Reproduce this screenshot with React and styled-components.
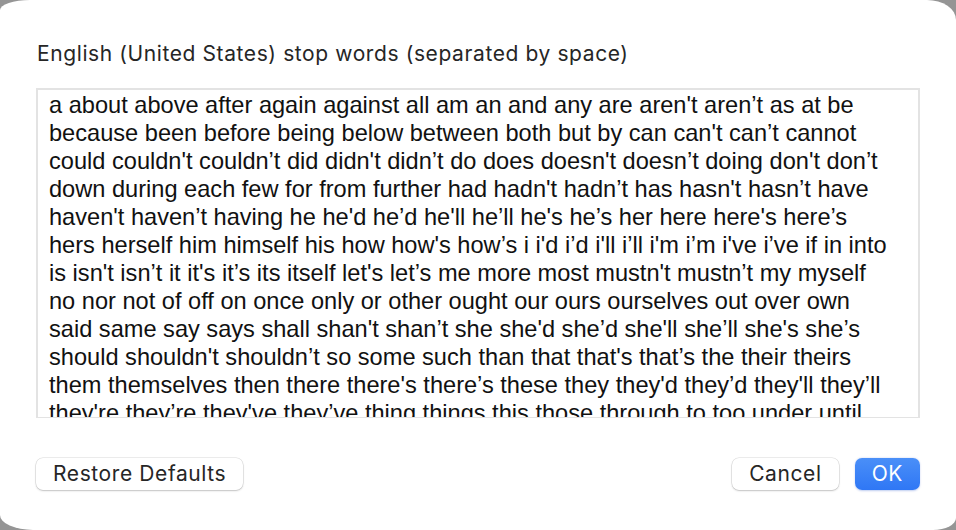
import React from 'react';
import styled, { createGlobalStyle } from 'styled-components';

// wrapped the way the text view shows them
const STOP_WORD_LINES = [
	"a about above after again against all am an and any are aren't aren’t as at be",
	"because been before being below between both but by can can't can’t cannot",
	"could couldn't couldn’t did didn't didn’t do does doesn't doesn’t doing don't don’t",
	"down during each few for from further had hadn't hadn’t has hasn't hasn’t have",
	"haven't haven’t having he he'd he’d he'll he’ll he's he’s her here here's here’s",
	"hers herself him himself his how how's how’s i i'd i’d i'll i’ll i'm i’m i've i’ve if in into",
	"is isn't isn’t it it's it’s its itself let's let’s me more most mustn't mustn’t my myself",
	'no nor not of off on once only or other ought our ours ourselves out over own',
	"said same say says shall shan't shan’t she she'd she’d she'll she’ll she's she’s",
	"should shouldn't shouldn’t so some such than that that's that’s the their theirs",
	"them themselves then there there's there’s these they they'd they’d they'll they’ll",
	"they're they’re they've they’ve thing things this those through to too under until",
	"up very was wasn't wasn’t we we'd we’d we'll we’ll we're we’re we've we’ve were",
];

const GlobalStyle = createGlobalStyle`
	html, body {
		margin: 0;
		padding: 0;
		width: 100%;
		height: 100%;
		background: #959595;
		overflow: hidden;
	}
	#root {
		height: 100%;
	}
	* {
		box-sizing: border-box;
	}
`;

const Dialog = styled.div`
	height: 100%;
	background: #ffffff;
	border-radius: 30px 29px 23px 33px / 10px 20px 12px 15px;
	padding: 40px 36px 0 36px;
	display: flex;
	flex-direction: column;
	font-family: Inter, 'Noto Sans', sans-serif;
	color: #262626;
`;

const Label = styled.div`
	font-size: 21px;
	line-height: 28px;
	letter-spacing: 0.6px;
	padding-left: 1px;
`;

const TextView = styled.div`
	margin-top: 20px;
	width: 884px;
	height: 330px;
	padding: 1px 0 0 11px;
	border: 2px solid #e3e3e3;
	border-bottom-width: 1px;
	background: #fff;
	overflow: hidden;
	font-family: 'Liberation Sans', Arial, sans-serif;
	font-size: 23.6px;
	line-height: 28px;
	color: #111;
`;

const TextLine = styled.div`
	white-space: nowrap;
`;

const Footer = styled.div`
	display: flex;
	align-items: center;
	gap: 16px;
	margin-top: 40px;
`;

const Spacer = styled.div`
	flex: 1;
`;

const Button = styled.button`
	height: 32px;
	padding: 0 17px;
	min-width: 64px;
	border: none;
	border-radius: 7px;
	font-family: Inter, 'Noto Sans', sans-serif;
	font-size: 21px;
	letter-spacing: 0.6px;
	line-height: 32px;
	color: ${p => (p.$primary ? '#ffffff' : '#262626')};
	background: ${p => (p.$primary ? 'linear-gradient(#4a8ff8, #2f77f5)' : '#ffffff')};
	box-shadow: ${p =>
		p.$primary
			? '0 0.5px 2px rgba(0, 60, 200, 0.25)'
			: '0 0 0 0.5px rgba(0, 0, 0, 0.14), 0 1px 2px rgba(0, 0, 0, 0.18)'};
	cursor: default;
`;

export default function App() {
	return (
		<>
			<GlobalStyle />
			<Dialog>
				<Label>English (United States) stop words (separated by space)</Label>
				<TextView>
					{STOP_WORD_LINES.map(line => (
						<TextLine key={line}>{line}</TextLine>
					))}
				</TextView>
				<Footer>
					<Button>Restore Defaults</Button>
					<Spacer />
					<Button>Cancel</Button>
					<Button $primary>OK</Button>
				</Footer>
			</Dialog>
		</>
	);
}
